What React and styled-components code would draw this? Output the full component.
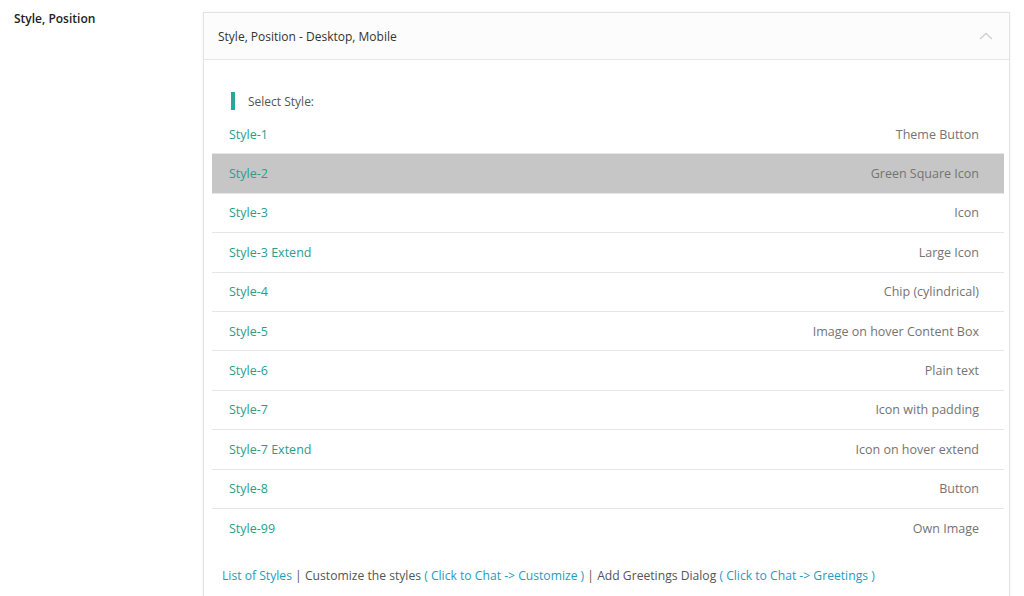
import React from "react";
import styled, { createGlobalStyle } from "styled-components";

const Global = createGlobalStyle`
  html, body { margin: 0; padding: 0; background: #fff; }
  body { font-family: "Open Sans", "Noto Sans", "Liberation Sans", sans-serif; color: #444; }
  * { box-sizing: border-box; }
`;

const Page = styled.div`
  display: flex;
  align-items: flex-start;
  height: 596px;
  overflow: hidden;
`;

const Label = styled.div`
  width: 203px;
  flex: none;
  padding: 10px 0 0 14px;
  font-size: 12px;
  font-weight: 600;
  color: #222;
`;

const Card = styled.div`
  flex: 1;
  margin: 12px 14px 0 0;
  border: 1px solid #e3e3e3;
  border-bottom: none;
  box-shadow: 0 0 3px rgba(0,0,0,0.06);
  min-height: 600px;
`;

const Header = styled.div`
  height: 47px;
  display: flex;
  align-items: center;
  justify-content: space-between;
  padding: 0 16px 0 14px;
  background: #fcfcfc;
  border-bottom: 1px solid #e6e6e6;
  font-size: 12px;
  color: #333;
`;

const Body = styled.div`
  padding: 32px 5px 0 8px;
`;

const Heading = styled.div`
  display: flex;
  align-items: center;
  gap: 13px;
  padding-left: 19px;
  height: 18px;
  font-size: 12px;
  color: #555;
  &::before {
    content: "";
    width: 4px;
    height: 18px;
    background: #2aa59a;
  }
`;

const List = styled.div`
  margin-top: 5px;
`;

const Row = styled.div`
  display: flex;
  align-items: center;
  justify-content: space-between;
  height: 39.4px;
  padding: 0 25px 0 17px;
  font-size: 12.5px;
  background: ${(p) => (p.$active ? "#c6c6c6" : "transparent")};
  border-bottom: ${(p) => (p.$last ? "none" : "1px solid #e6e6e6")};
`;

const Name = styled.span`
  color: #2a9d8c;
`;

const Desc = styled.span`
  color: #747474;
`;

const Footer = styled.div`
  padding: 19px 0 0 10px;
  font-size: 12.15px;
  color: #555;
  white-space: nowrap;
`;

const Link = styled.span`
  color: #1e9cc4;
`;

const Chevron = () => (
  <svg width="14" height="8" viewBox="0 0 14 8" fill="none">
    <path d="M1 7 L7 1.5 L13 7" stroke="#cfcfcf" strokeWidth="1.3" />
  </svg>
);

const rows = [
  ["Style-1", "Theme Button"],
  ["Style-2", "Green Square Icon"],
  ["Style-3", "Icon"],
  ["Style-3 Extend", "Large Icon"],
  ["Style-4", "Chip (cylindrical)"],
  ["Style-5", "Image on hover Content Box"],
  ["Style-6", "Plain text"],
  ["Style-7", "Icon with padding"],
  ["Style-7 Extend", "Icon on hover extend"],
  ["Style-8", "Button"],
  ["Style-99", "Own Image"],
];

export default function App() {
  return (
    <>
      <Global />
      <Page>
        <Label>Style, Position</Label>
        <Card>
          <Header>
            <span>Style, Position - Desktop, Mobile</span>
            <Chevron />
          </Header>
          <Body>
            <Heading>Select Style:</Heading>
            <List>
              {rows.map(([n, d], i) => (
                <Row key={n} $active={i === 1} $last={i === rows.length - 1}>
                  <Name>{n}</Name>
                  <Desc>{d}</Desc>
                </Row>
              ))}
            </List>
            <Footer>
              <Link>List of Styles</Link> | Customize the styles{" "}
              <Link>( Click to Chat -&gt; Customize )</Link> | Add Greetings Dialog{" "}
              <Link>( Click to Chat -&gt; Greetings )</Link>
            </Footer>
          </Body>
        </Card>
      </Page>
    </>
  );
}
